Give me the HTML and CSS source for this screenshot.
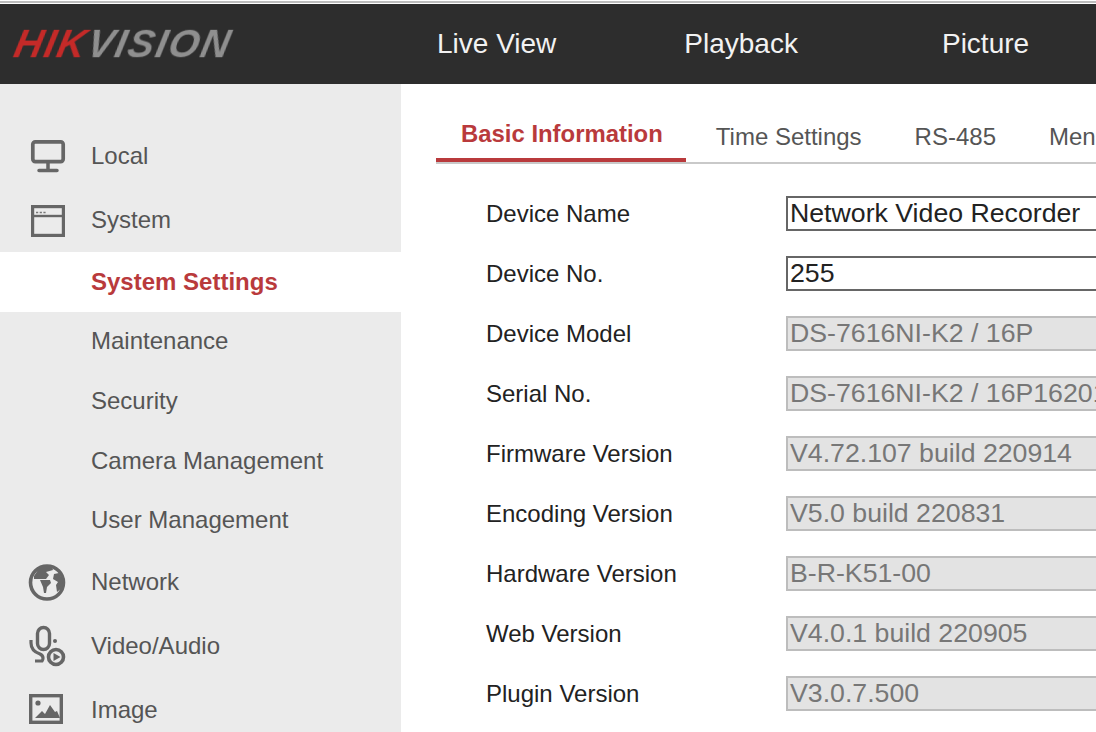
FILE: index.html
```html
<!DOCTYPE html>
<html lang="en">
<head>
<meta charset="utf-8">
<title>Hikvision Configuration</title>
<link rel="stylesheet" href="styles.css">
</head>
<body>
<div class="page">
  <div class="topstrip"></div>
  <header class="topbar">
    <div class="logo-wrap"><div class="logo"><span class="logo-red">HIK</span><span class="logo-grey">VISION</span></div></div>
    <nav class="mainnav">
      <a class="mainnav-live">Live View</a>
      <a class="mainnav-play">Playback</a>
      <a class="mainnav-pic">Picture</a>
    </nav>
  </header>
  <div class="body">
    <aside class="sidebar">
      <div class="item">
        <svg class="icon" viewBox="0 0 40 40"><rect x="5.800" y="5.800" width="30.400" height="19.800" rx="2.500" fill="none" stroke="#666" stroke-width="3.700"/><path d="M21 27v7M12 34.500h18" fill="none" stroke="#666" stroke-width="3.500" stroke-linecap="round"/></svg>
        <span>Local</span>
      </div>
      <div class="item">
        <svg class="icon" viewBox="0 0 40 40"><rect x="5.600" y="6.600" width="30.800" height="28.800" fill="none" stroke="#666" stroke-width="3.200"/><path d="M5 16h32" stroke="#666" stroke-width="2.400"/><path d="M9 12.500h11" stroke="#777" stroke-width="1.600" stroke-dasharray="2.200 1.500"/></svg>
        <span>System</span>
      </div>
      <div class="sub sub-active">System Settings</div>
      <div class="sub">Maintenance</div>
      <div class="sub">Security</div>
      <div class="sub">Camera Management</div>
      <div class="sub sub-last">User Management</div>
      <div class="item">
        <svg class="icon" viewBox="0 0 40 40"><circle cx="20" cy="20.500" r="16.500" fill="none" stroke="#666" stroke-width="3.600"/><path d="M7 14l6-9h12l1 3-7 2 3 3-3 4H7zM13 18h10l1 3-4 4-1 6-2 0-1-6zM27 12l5-1 4 7-1 8-5 4-1-7 2-3-5-3z" fill="#666"/></svg>
        <span>Network</span>
      </div>
      <div class="item">
        <svg class="icon" viewBox="0 0 40 40"><rect x="10.500" y="1.500" width="12" height="22" rx="6" fill="none" stroke="#666" stroke-width="3.400"/><path d="M4 14v3c0 6 3 9 9 11 2 1 3 2 3 4 0 1 0 2-1 3H8" fill="none" stroke="#666" stroke-width="3.200"/><circle cx="28" cy="15" r="2" fill="#666"/><circle cx="29" cy="31" r="7.500" fill="none" stroke="#666" stroke-width="3.600"/><path d="M26.500 27l7 4-7 4z" fill="#666"/></svg>
        <span>Video/Audio</span>
      </div>
      <div class="item">
        <svg class="icon" viewBox="0 0 40 40"><rect x="3.700" y="5.700" width="30.600" height="26.600" fill="none" stroke="#666" stroke-width="3.400"/><circle cx="11" cy="13" r="2.600" fill="#666"/><path d="M8 28l7-7 3 3 5-9 5 7 2-1 3 7z" fill="#666"/></svg>
        <span>Image</span>
      </div>
    </aside>
    <main class="content">
      <div class="tabs">
        <a class="tab tab-active">Basic Information</a>
        <a class="tab">Time Settings</a>
        <a class="tab">RS-485</a>
        <a class="tab">Menu</a>
      </div>
      <div class="form">
        <div class="row"><label>Device Name</label><div class="field">Network Video Recorder</div></div>
        <div class="row"><label>Device No.</label><div class="field">255</div></div>
        <div class="row"><label>Device Model</label><div class="field off">DS-7616NI-K2 / 16P</div></div>
        <div class="row"><label>Serial No.</label><div class="field off">DS-7616NI-K2 / 16P16201</div></div>
        <div class="row"><label>Firmware Version</label><div class="field off">V4.72.107 build 220914</div></div>
        <div class="row"><label>Encoding Version</label><div class="field off">V5.0 build 220831</div></div>
        <div class="row"><label>Hardware Version</label><div class="field off">B-R-K51-00</div></div>
        <div class="row"><label>Web Version</label><div class="field off">V4.0.1 build 220905</div></div>
        <div class="row"><label>Plugin Version</label><div class="field off">V3.0.7.500</div></div>
      </div>
    </main>
  </div>
</div>
</body>
</html>
```
FILE: styles.css
```css
* { box-sizing: border-box; }
html, body { margin: 0; height: 100%; overflow: hidden; background: #fff; }
.page { width: 1096px; height: 732px; overflow: hidden; font-family: "Liberation Sans", Arial, sans-serif; display: flex; flex-direction: column; border-top: 1px solid #fff; }
.topstrip { height: 3px; flex: none; background: #fff; border-top: 2px solid #bdbdbd; }
.topbar { height: 80px; flex: none; background: #2d2d2d; display: flex; align-items: center; }
.logo-wrap { width: 401px; flex: none; padding-left: 15px; }
.logo { display: inline-block; font: italic bold 39px "Liberation Sans", Arial, sans-serif; letter-spacing: 1.900px; transform: skewX(-12deg); filter: blur(.7px); }
.logo-red { color: #c42a28; }
.logo-grey { color: #8f8f8f; }
.mainnav { display: flex; font-size: 28px; color: #f2f2f2; }
.mainnav a { white-space: nowrap; }
.mainnav-live { margin-left: 36px; }
.mainnav-play { margin-left: 128px; }
.mainnav-pic { margin-left: 144px; }
.body { flex: 1; display: flex; min-height: 0; }
.sidebar { width: 401px; flex: none; background: #ebebeb; padding-top: 40px; color: #555; font-size: 24px; }
.item { height: 64px; display: flex; align-items: center; padding-left: 27px; }
.icon { width: 40px; height: 40px; flex: none; margin-right: 24px; overflow: visible; filter: blur(.35px); }
.sub { height: 60px; line-height: 58px; padding-left: 91px; }
.sub-active { background: #fff; color: #b93a3c; font-weight: bold; line-height: 60px; }
.sub-last { height: 58px; line-height: 56px; }
.content { flex: 1; min-width: 0; overflow: hidden; padding: 32px 0 0 35px; }
.tabs { display: flex; border-bottom: 2px solid #c9c9c9; height: 48px; color: #555; font-size: 24px; white-space: nowrap; }
.tab { padding: 7px 25px 0 28px; }
.tab-active { color: #b93a3c; font-weight: bold; font-size: 23.900px; height: 46px; padding: 4px 23px 0 25px; margin-right: 2px; border-bottom: 4px solid #b93a3c; }
.form { padding-top: 21px; }
.row { height: 60px; display: flex; padding-left: 50px; color: #222; font-size: 24px; }
.row label { width: 300px; flex: none; line-height: 58px; height: 60px; }
.field { width: 400px; flex: none; height: 35px; margin-top: 11px; border: 2px solid #666; background: #fff; color: #222; font-size: 26.700px; line-height: 31px; padding-left: 2px; white-space: nowrap; overflow: hidden; }
.field.off { background: #e3e3e3; border-color: #bdbdbd; color: #777; }
```
